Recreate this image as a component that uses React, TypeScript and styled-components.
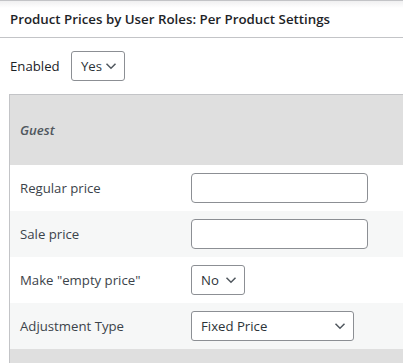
import React from 'react';
import styled, { createGlobalStyle } from 'styled-components';

const GlobalStyle = createGlobalStyle`
  html, body {
    margin: 0;
    padding: 0;
    background: #ffffff;
  }
  body {
    font-family: "Open Sans", "Noto Sans", "Liberation Sans", sans-serif;
    color: #3c434a;
    font-size: 13.2px;
  }
`;

const Postbox = styled.div`
  width: 403px;
  height: 363px;
  overflow: hidden;
  border-top: 1px solid #c3c4c7;
  background: #ffffff;
`;

const BoxHeader = styled.h2`
  margin: 0;
  height: 36px;
  padding: 0 10px;
  display: flex;
  align-items: center;
  border-bottom: 1px solid #c3c4c7;
  background: linear-gradient(to bottom, #f0f0f1 0px, #ffffff 7px);
  font-size: 13.3px;
  font-weight: 600;
  color: #1d2327;
  white-space: nowrap;
`;

const Inside = styled.div`
  padding: 13px 0 0 10px;
`;

const EnabledRow = styled.div`
  display: flex;
  align-items: center;
`;

const EnabledLabel = styled.span`
  width: 61px;
  color: #1d2327;
`;

const Select = styled.div<{ $width: number }>`
  box-sizing: border-box;
  width: ${p => p.$width}px;
  height: 30px;
  padding: 0 7px 0 9px;
  display: flex;
  align-items: center;
  justify-content: space-between;
  border: 1px solid #8c8f94;
  border-radius: 3px;
  background: #ffffff;
  color: #2c3338;
`;

const Chevron = styled.svg`
  width: 12px;
  height: 8px;
  flex-shrink: 0;
`;

const RolesTable = styled.div`
  margin: 13px 0 0 -1px;
  width: 420px;
  border-left: 1px solid #c3c4c7;
  border-top: 1px solid #c3c4c7;
`;

const RoleHeader = styled.div`
  height: 70px;
  padding-left: 10px;
  display: flex;
  align-items: center;
  background: #dfdfdf;
  font-style: italic;
  font-weight: 600;
  color: #50575e;
`;

const Row = styled.div<{ $alt?: boolean }>`
  height: 46px;
  padding-left: 10px;
  display: flex;
  align-items: center;
  background: ${p => (p.$alt ? '#f6f7f7' : '#ffffff')};
`;

const RowLabel = styled.span`
  width: 171px;
  color: #3c434a;
  white-space: nowrap;
`;

const TextInput = styled.input`
  box-sizing: border-box;
  width: 177px;
  height: 30px;
  margin: 0;
  padding: 0 8px;
  border: 1px solid #8c8f94;
  border-radius: 4px;
  background: #ffffff;
  font-family: inherit;
  font-size: 14px;
`;

const NextRoleHeader = styled.div`
  height: 40px;
  background: #dfdfdf;
`;

const ChevronDown = () => (
  <Chevron viewBox="0 0 12 8">
    <path d="M1.5 1.8 L6 6.2 L10.5 1.8" fill="none" stroke="#50575e" strokeWidth="1.5" />
  </Chevron>
);

const App: React.FC = () => {
  return (
    <>
      <GlobalStyle />
      <Postbox>
        <BoxHeader>Product Prices by User Roles: Per Product Settings</BoxHeader>
        <Inside>
          <EnabledRow>
            <EnabledLabel>Enabled</EnabledLabel>
            <Select $width={54}>
              Yes
              <ChevronDown />
            </Select>
          </EnabledRow>

          <RolesTable>
            <RoleHeader>Guest</RoleHeader>
            <Row>
              <RowLabel>Regular price</RowLabel>
              <TextInput type="text" />
            </Row>
            <Row $alt>
              <RowLabel>Sale price</RowLabel>
              <TextInput type="text" />
            </Row>
            <Row>
              <RowLabel>Make "empty price"</RowLabel>
              <Select $width={54}>
                No
                <ChevronDown />
              </Select>
            </Row>
            <Row $alt>
              <RowLabel>Adjustment Type</RowLabel>
              <Select $width={163}>
                Fixed Price
                <ChevronDown />
              </Select>
            </Row>
            <NextRoleHeader />
          </RolesTable>
        </Inside>
      </Postbox>
    </>
  );
};

export default App;
